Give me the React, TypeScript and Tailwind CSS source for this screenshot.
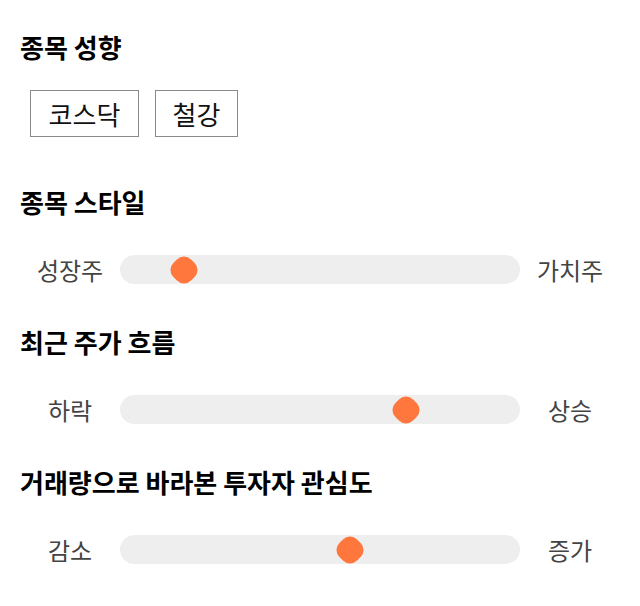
// Stock preference filter panel

const font = { fontFamily: '"Noto Sans CJK KR", "Noto Sans", sans-serif' };

interface SliderRowProps {
  left: string;
  right: string;
  value: number;
}

const SliderRow = ({ left, right, value }: SliderRowProps) => (
  <div className="flex items-center">
    <span className="w-[100px] text-center text-[24px] leading-[29px] text-[#444]">{left}</span>
    <div className="relative h-[29px] w-[400px] rounded-full bg-[#eeeeee]">
      <div
        className="absolute top-1/2 h-[25px] w-[25px] -translate-x-1/2 -translate-y-1/2 rotate-45 rounded-[10px] bg-[#ff773d]"
        style={{ left: `${value}%` }}
      />
    </div>
    <span className="w-[100px] text-center text-[24px] leading-[29px] text-[#444]">{right}</span>
  </div>
);

const Heading = ({ children, className }: { children: string; className?: string }) => (
  <h2 className={`text-[26px] font-bold leading-[33px] text-black ${className ?? ''}`}>{children}</h2>
);

export default function App() {
  return (
    <div className="min-h-[606px] w-[640px] bg-white px-5 pt-[30px]" style={font}>
      <Heading>종목 성향</Heading>
      <div className="mt-[27px] flex gap-4 pl-[10px]">
        <button className="h-[47px] w-[109px] border border-[#8a8a8a] text-[26px] text-[#111]">코스닥</button>
        <button className="h-[47px] w-[83px] border border-[#8a8a8a] text-[26px] text-[#111]">철강</button>
      </div>

      <Heading className="mt-[48px]">종목 스타일</Heading>
      <div className="mt-[37px]">
        <SliderRow left="성장주" right="가치주" value={16} />
      </div>

      <Heading className="mt-[41px]">최근 주가 흐름</Heading>
      <div className="mt-[37px]">
        <SliderRow left="하락" right="상승" value={71.5} />
      </div>

      <Heading className="mt-[41px]">거래량으로 바라본 투자자 관심도</Heading>
      <div className="mt-[37px]">
        <SliderRow left="감소" right="증가" value={57.5} />
      </div>
    </div>
  );
}
